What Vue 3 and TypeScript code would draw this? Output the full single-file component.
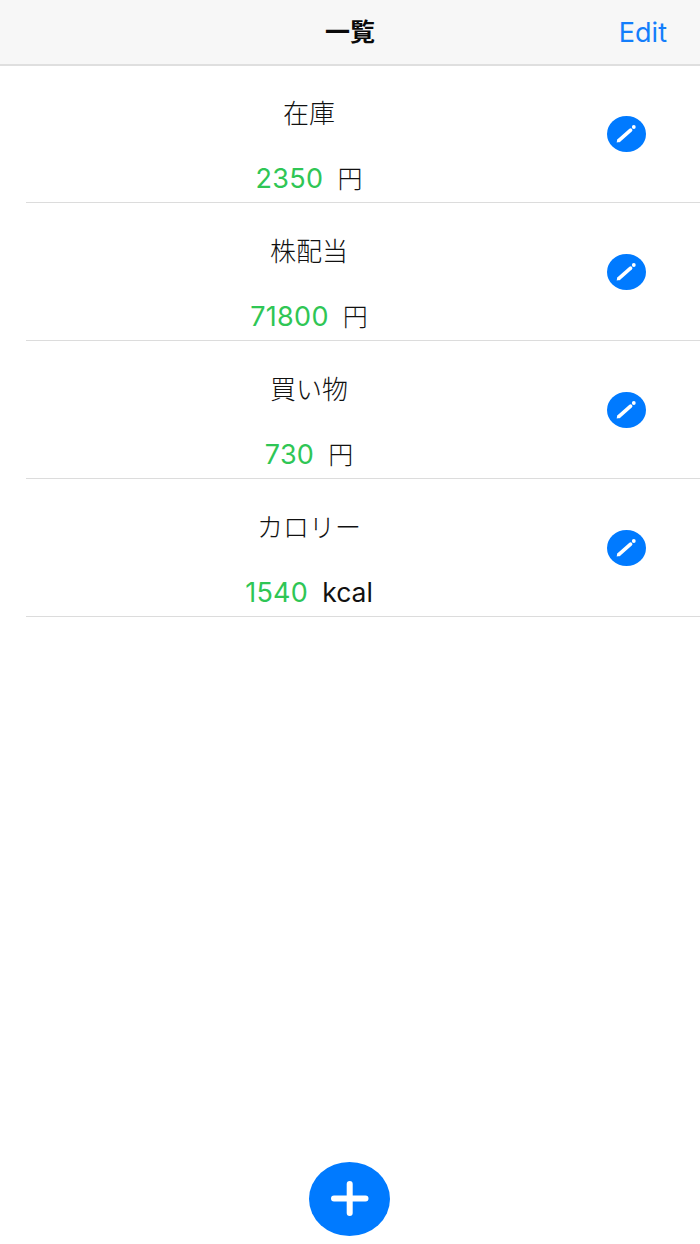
<script setup lang="ts">
interface Item { name: string; value: number; unit: string }
const items: Item[] = [
  { name: '在庫', value: 2350, unit: '円' },
  { name: '株配当', value: 71800, unit: '円' },
  { name: '買い物', value: 730, unit: '円' },
  { name: 'カロリー', value: 1540, unit: 'kcal' },
]
</script>

<template>
  <div class="screen">
    <header class="nav">
      <span class="title">一覧</span>
      <a class="edit">Edit</a>
    </header>
    <main class="list">
      <div v-for="item in items" :key="item.name" class="row">
        <div class="info">
          <div class="name">{{ item.name }}</div>
          <div class="amount">
            <span class="value">{{ item.value }}</span>
            <span class="unit" :class="{ yen: item.unit === '円' }">{{ item.unit }}</span>
          </div>
        </div>
        <button class="pen" type="button" aria-label="edit">
          <svg viewBox="0 0 39 36" width="39" height="36">
            <path d="M12 24.4 L23.6 14.2" stroke="#fff" stroke-width="3.6" stroke-linecap="round" fill="none" />
            <path d="M9.6 26.6 L10.6 23 L13.4 25.8 Z" fill="#fff" />
            <circle cx="26.8" cy="11" r="1.9" fill="#fff" />
          </svg>
        </button>
      </div>
    </main>
    <div class="footer">
      <button class="add" type="button" aria-label="add">
        <svg viewBox="0 0 81 74" width="81" height="74">
          <path d="M25 36.5 H56.5 M40.7 22 V51" stroke="#fff" stroke-width="6" stroke-linecap="round" fill="none" />
        </svg>
      </button>
    </div>
  </div>
</template>

<style>
html, body { margin: 0; background: #fff; }
</style>

<style scoped>
.screen {
  width: 700px;
  height: 1244px;
  display: flex;
  flex-direction: column;
  font-family: Inter, "Liberation Sans", "Noto Sans CJK JP", sans-serif;
  background: #fff;
  overflow: hidden;
}
.nav {
  height: 60px;
  padding-bottom: 4px;
  flex: none;
  display: flex;
  align-items: center;
  justify-content: center;
  position: relative;
  background: #f7f7f7;
  border-bottom: 2px solid #dfdfdf;
}
.title {
  font-family: "Noto Sans CJK JP", sans-serif;
  font-size: 25px;
  font-weight: 700;
  color: #0a0a0a;
}
.edit {
  position: absolute;
  right: 33px;
  top: 16px;
  font-size: 27px;
  line-height: 34px;
  color: #147efb;
}
.list {
  flex: 1;
  margin-top: -1px;
  padding-left: 26px;
}
.row {
  height: 137px;
  display: flex;
  align-items: stretch;
  border-bottom: 1px solid #dcdcdc;
}
.info {
  width: 566px;
  display: flex;
  flex-direction: column;
  align-items: center;
}
.name {
  margin-top: 29px;
  font-family: "Noto Sans CJK JP", sans-serif;
  font-size: 26px;
  font-weight: 300;
  line-height: 36px;
  color: #111;
}
.amount {
  margin-top: 31px;
  display: flex;
  gap: 14px;
  align-items: center;
  height: 34px;
}
.value {
  font-size: 27px;
  font-weight: 400;
  letter-spacing: 0.3px;
  color: #2fc655;
}
.unit {
  font-size: 26.5px;
  font-weight: 400;
  color: #111;
}
.unit.yen {
  font-family: "Noto Sans CJK JP", sans-serif;
  font-size: 25px;
  font-weight: 300;
  position: relative;
  top: -1px;
}
.pen {
  margin: 51px 0 0 15px;
  width: 39px;
  height: 36px;
  padding: 0;
  border: 0;
  border-radius: 50%;
  background: #007aff;
  flex: none;
}
.pen svg, .add svg { display: block; }
.footer {
  flex: none;
  height: 82px;
  display: flex;
  justify-content: center;
  padding-right: 1px;
}
.add {
  width: 81px;
  height: 74px;
  padding: 0;
  border: 0;
  border-radius: 50%;
  background: #007aff;
}
</style>
